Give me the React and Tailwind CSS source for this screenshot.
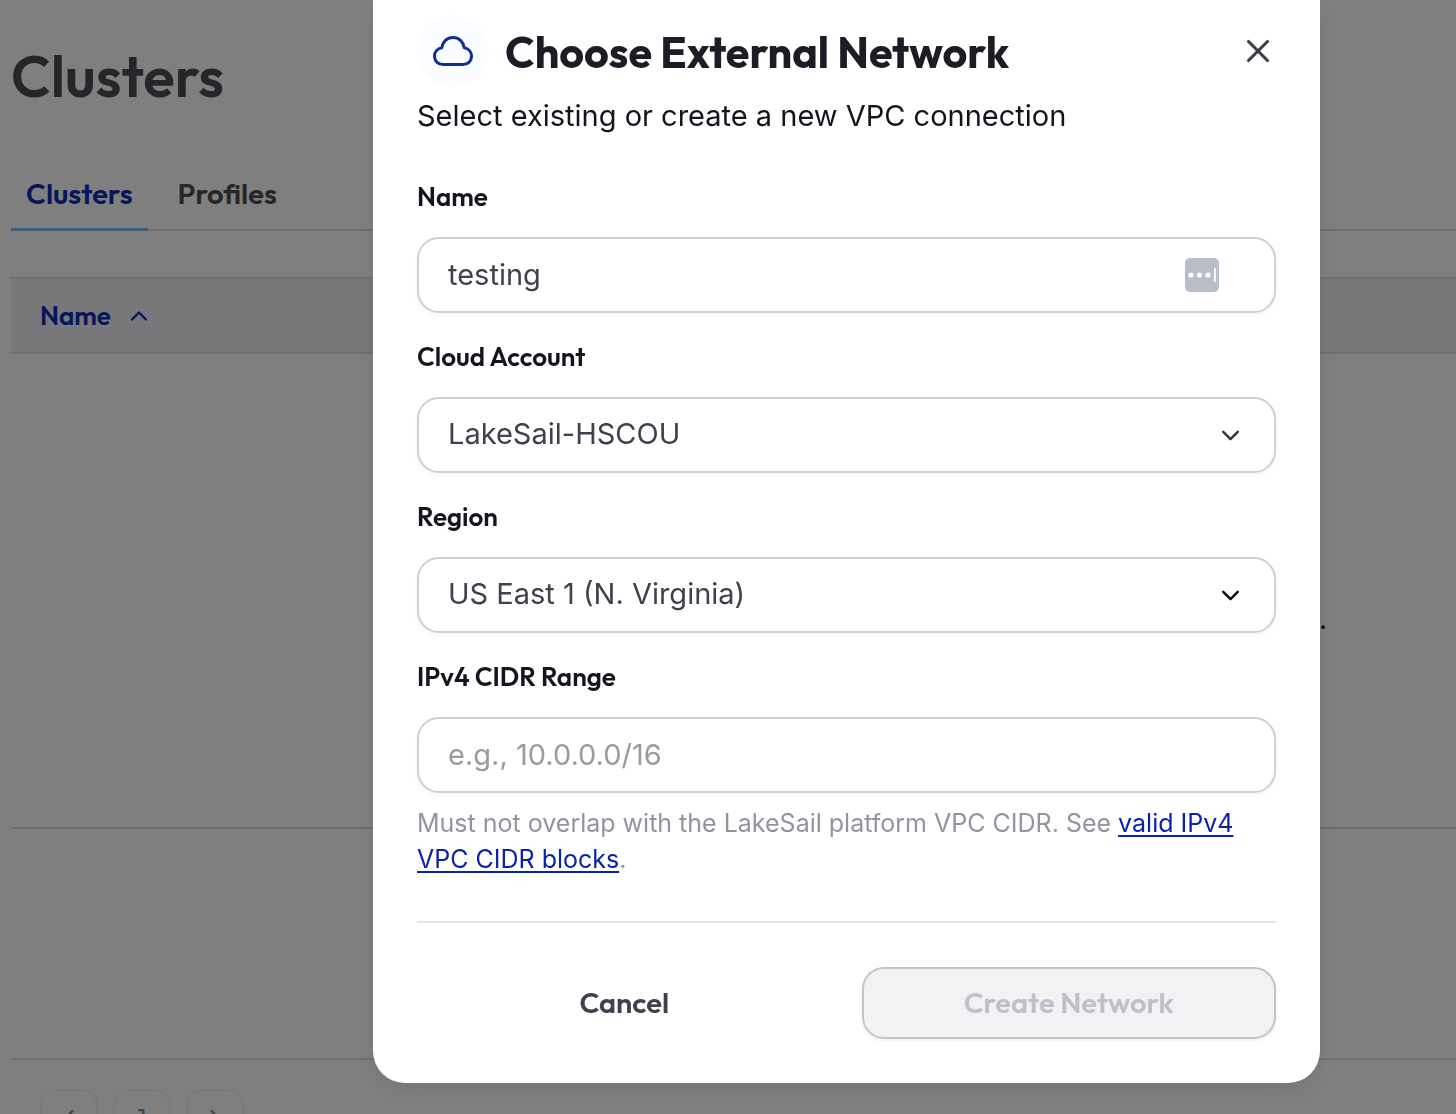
import { ChevronDown, ChevronLeft, ChevronRight, ChevronUp, X } from "lucide-react";

const pageButton =
  "flex size-[58px] items-center justify-center rounded-[16px] border-2 border-[#f4f4f6]";

function ClustersPage() {
  return (
    <main className="h-screen overflow-hidden bg-white pl-[11px] pt-9 font-['Outfit','Lato',sans-serif] text-[#4a4b55]">
      <h1 className="text-[58px] font-semibold leading-[80px]">Clusters</h1>
      <nav className="mt-10 flex h-[75px] gap-[15px] border-b-2 border-[#dcdce6] text-[29px] font-semibold leading-[40px]">
        <a href="#clusters" className="-mb-[2px] border-b-[3px] border-[#7cbcf8] px-[15px] pt-[18px] text-[#0c2cb4]">
          Clusters
        </a>
        <a href="#profiles" className="px-[15px] pt-[18px]">
          Profiles
        </a>
      </nav>
      <table className="mt-[46px] w-full border-collapse text-left">
        <thead>
          <tr className="h-[75px] border-y-2 border-[#dcdce6] bg-[#f0f0f4]">
            <th scope="col" className="pl-[29px] font-semibold">
              <button type="button" className="flex items-center gap-[14px] text-[26px] leading-[36px] text-[#0c2cb4]">
                Name
                <ChevronUp className="size-[28px]" strokeWidth={2} />
              </button>
            </th>
          </tr>
        </thead>
        <tbody>
          <tr className="h-[475px] border-b-2 border-[#dcdce6]">
            <td className="pr-[129px] pt-[56px] text-right font-['Inter',sans-serif] text-[28px] leading-[36px] text-[#22222c]">
              .
            </td>
          </tr>
          <tr className="h-[231px] border-b-2 border-[#dcdce6]">
            <td />
          </tr>
        </tbody>
      </table>
      <div className="mt-[29px] flex gap-[15px] pl-[29px] text-[26px] text-[#8a8a94]">
        <button type="button" aria-label="Previous page" className={pageButton}>
          <ChevronLeft className="size-[28px]" />
        </button>
        <button type="button" className={pageButton}>
          1
        </button>
        <button type="button" aria-label="Next page" className={pageButton}>
          <ChevronRight className="size-[28px]" />
        </button>
      </div>
    </main>
  );
}

function Field({ id, label, children }) {
  return (
    <div>
      <label htmlFor={id} className="block font-['Outfit','Lato',sans-serif] text-[26px] font-semibold leading-[36px] text-[#15161d]">
        {label}
      </label>
      <div className="relative mt-[22px]">{children}</div>
    </div>
  );
}

const control =
  "block h-[76px] w-full appearance-none rounded-[22px] border-2 border-[#cfcedb] bg-white px-[29px] pb-[2px] text-[29px] text-[#41414d] shadow-[0_2px_4px_rgba(16,24,40,0.05)] outline-none placeholder:text-[#9a9a9f]";

function PasswordBadge() {
  return (
    <svg viewBox="0 0 34 34" className="absolute right-[57px] top-[21px] size-[34px]" aria-hidden="true">
      <rect width="34" height="34" rx="5" fill="#b7bec9" />
      <circle cx="6" cy="17" r="2.6" fill="#fff" />
      <circle cx="14.5" cy="17" r="2.6" fill="#fff" />
      <circle cx="23" cy="17" r="2.6" fill="#fff" />
      <rect x="29" y="10" width="1.8" height="14" fill="#fff" />
    </svg>
  );
}

function CloudIcon() {
  return (
    <svg viewBox="0 0 42 32" className="h-[32px] w-[42px]" fill="none" stroke="#0e2f8f" strokeWidth="3" strokeLinejoin="round" aria-hidden="true">
      <path d="M11 29.5H31C36.2 29.5 39.5 25.8 39.5 21.2C39.5 16.9 36.6 13.4 32.2 12.7C31.2 6.4 26.6 2.5 21 2.5C15.4 2.5 10.8 6.4 9.8 12.7C5.4 13.4 2.5 16.9 2.5 21.2C2.5 25.8 5.8 29.5 11 29.5Z" />
    </svg>
  );
}

function NetworkDialog() {
  return (
    <div className="fixed inset-0 flex items-start overflow-hidden bg-black/50 pl-[373px] pr-[136px]">
      <section
        role="dialog"
        aria-modal="true"
        aria-labelledby="dialog-title"
        className="min-w-0 flex-1 rounded-b-[32px] bg-white px-[44px] pb-[44px] pt-[15px] font-['Inter',sans-serif] shadow-[0_8px_20px_rgba(0,0,0,0.08)]"
      >
        <header className="flex items-center gap-4">
          <span className="flex size-[72px] shrink-0 items-center justify-center rounded-full bg-[#fafcff]">
            <CloudIcon />
          </span>
          <h2 id="dialog-title" className="flex-1 whitespace-nowrap pt-[2px] font-['Outfit','Lato',sans-serif] text-[43px] font-bold leading-[60px] text-[#1b1c25]">
            Choose External Network
          </h2>
          <button type="button" aria-label="Close" className="flex size-9 items-center justify-center text-[#3d3d4a]">
            <X className="size-[38px] shrink-0" strokeWidth={2} />
          </button>
        </header>
        <p className="mt-[5px] text-[29px] leading-[48px] text-[#14141c]">
          Select existing or create a new VPC connection
        </p>

        <form className="mt-[39px]">
          <div className="flex flex-col gap-[26px]">
            <Field id="name" label="Name">
              <input id="name" type="text" defaultValue="testing" className={control} />
              <PasswordBadge />
            </Field>
            <Field id="account" label="Cloud Account">
              <select id="account" className={control}>
                <option>LakeSail-HSCOU</option>
              </select>
              <ChevronDown className="pointer-events-none absolute right-[31px] top-[24px] size-[29px] text-[#33333f]" strokeWidth={2} />
            </Field>
            <Field id="region" label="Region">
              <select id="region" className={control}>
                <option>US East 1 (N. Virginia)</option>
              </select>
              <ChevronDown className="pointer-events-none absolute right-[31px] top-[24px] size-[29px] text-[#0c0c12]" strokeWidth={2} />
            </Field>
            <Field id="cidr" label="IPv4 CIDR Range">
              <input id="cidr" type="text" placeholder="e.g., 10.0.0.0/16" aria-describedby="cidr-help" className={control} />
            </Field>
          </div>
          <p id="cidr-help" className="mt-3 text-[25px] leading-[36px] text-[#92949e]">
            Must not overlap with the LakeSail platform VPC CIDR. See{" "}
            <a href="#cidr-blocks" className="text-[#0a23ab] underline decoration-2 underline-offset-3">
              valid IPv4 VPC CIDR blocks
            </a>
            .
          </p>
          <footer className="mt-[44px] grid grid-cols-2 gap-[30px] border-t-2 border-[#e3e3ea] pt-[44px] font-['Outfit','Lato',sans-serif] text-[29px] font-semibold">
            <button type="button" className="h-[72px] rounded-[22px] text-[#41414d]">
              Cancel
            </button>
            <button type="submit" disabled className="h-[72px] rounded-[22px] border-2 border-[#c4c4c8] bg-[#f2f2f5] text-[#bfc0ca] shadow-[0_2px_4px_rgba(16,24,40,0.06)]">
              Create Network
            </button>
          </footer>
        </form>
      </section>
    </div>
  );
}

export default function App() {
  return (
    <>
      <ClustersPage />
      <NetworkDialog />
    </>
  );
}
